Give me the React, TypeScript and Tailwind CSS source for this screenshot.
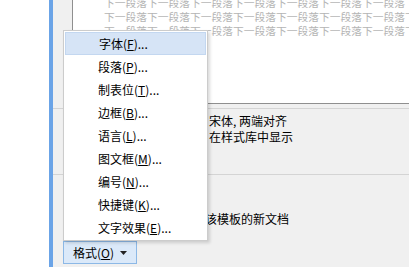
import { Fragment } from 'react'

const items: [string, string][] = [
  ['字体', 'F'],
  ['段落', 'P'],
  ['制表位', 'T'],
  ['边框', 'B'],
  ['语言', 'L'],
  ['图文框', 'M'],
  ['编号', 'N'],
  ['快捷键', 'K'],
  ['文字效果', 'E'],
]

const filler = '下一段落'.repeat(8)

export default function App() {
  return (
    <div className="relative w-[409px] h-[267px] overflow-hidden flex bg-white font-['Noto_Sans_CJK_SC','Noto_Sans',sans-serif] text-[12px] text-black">
      <div className="w-[49px] shrink-0 bg-white" />
      <div className="w-[4px] shrink-0 bg-[#6ba4e7]" />

      {/* dialog body */}
      <div className="flex-1 flex flex-col bg-[#f0f0f0] min-w-0">
        <div className="ml-[19px] h-[104px] shrink-0 bg-white border-l border-b border-[#8f8f8f] pl-[31px] overflow-hidden">
          <div className="-mt-[4px] text-[10.75px] leading-[14px] text-[#b4b4b4] whitespace-nowrap">
            <div>{filler}</div>
            <div>{filler}</div>
            <div>{filler}</div>
          </div>
        </div>

        <div className="mt-[4px] h-[66px] shrink-0 border-t border-[#d4d4d4] pt-[4px] pl-[156px] leading-[16px] whitespace-nowrap">
          <div>宋体, 两端对齐</div>
          <div>在样式库中显示</div>
        </div>

        <div className="h-[67px] shrink-0 border-t border-[#d4d4d4] pt-[36px] pl-[152px] leading-[16px] whitespace-nowrap">
          该模板的新文档
        </div>

        <div className="pl-[10px]">
          <button className="w-[74px] h-[23px] flex items-center pl-[9px] gap-[6px] bg-[#dbe9f9] border border-[#8cb8e6] text-[12px] text-black">
            <span>
              格式(<span className="underline">O</span>)
            </span>
            <svg width="7" height="4" viewBox="0 0 7 4">
              <path d="M0 0h7L3.5 4z" fill="#222" />
            </svg>
          </button>
        </div>
      </div>

      {/* popup menu */}
      <div className="absolute left-[63px] top-[30px] w-[145px] bg-white border border-[#cccccc] py-[1px] shadow-[2px_2px_3px_rgba(0,0,0,0.15)]">
        {items.map(([label, key], i) => (
          <div
            key={key}
            className={`h-[23px] mx-[1px] flex items-center pl-[33px] leading-none whitespace-nowrap ${
              i === 0 ? 'bg-[#d6e4f6] border border-[#c3d7f0] pl-[32px]' : ''
            }`}
          >
            <Fragment>
              {label}(<span className="underline">{key}</span>)...
            </Fragment>
          </div>
        ))}
      </div>
    </div>
  )
}
